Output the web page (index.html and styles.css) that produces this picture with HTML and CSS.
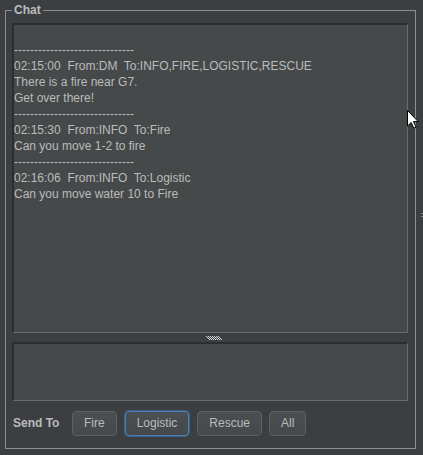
FILE: index.html
```html
<!DOCTYPE html>
<html lang="en">
<head>
<meta charset="UTF-8">
<title>Chat</title>
<link rel="stylesheet" href="styles.css">
</head>
<body>
<div class="chat-box">
    <span class="chat-title">Chat</span>
    <!-- Message log -->
    <div class="log">
        <div class="line">&nbsp;</div>
        <div class="line">------------------------------</div>
        <div class="line">02:15:00&nbsp; From:DM&nbsp; To:INFO,FIRE,LOGISTIC,RESCUE</div>
        <div class="line">There is a fire near G7.</div>
        <div class="line">Get over there!</div>
        <div class="line">------------------------------</div>
        <div class="line">02:15:30&nbsp; From:INFO&nbsp; To:Fire</div>
        <div class="line">Can you move 1-2 to fire</div>
        <div class="line">------------------------------</div>
        <div class="line">02:16:06&nbsp; From:INFO&nbsp; To:Logistic</div>
        <div class="line">Can you move water 10 to Fire</div>
    </div>
    <!-- Split pane divider -->
    <div class="divider">
        <svg width="16" height="4" viewBox="0 0 16 4">
            <g fill="#d8d8d8">
                <rect x="0" y="0" width="1" height="1"/><rect x="2" y="0" width="1" height="1"/>
                <rect x="4" y="0" width="1" height="1"/><rect x="6" y="0" width="1" height="1"/>
                <rect x="8" y="0" width="1" height="1"/><rect x="10" y="0" width="1" height="1"/>
                <rect x="12" y="0" width="1" height="1"/>
                <rect x="1" y="1" width="1" height="1"/><rect x="3" y="1" width="1" height="1"/>
                <rect x="5" y="1" width="1" height="1"/><rect x="7" y="1" width="1" height="1"/>
                <rect x="9" y="1" width="1" height="1"/><rect x="11" y="1" width="1" height="1"/>
                <rect x="13" y="1" width="1" height="1"/>
                <rect x="2" y="2" width="1" height="1"/><rect x="4" y="2" width="1" height="1"/>
                <rect x="6" y="2" width="1" height="1"/><rect x="8" y="2" width="1" height="1"/>
                <rect x="10" y="2" width="1" height="1"/><rect x="12" y="2" width="1" height="1"/>
                <rect x="14" y="2" width="1" height="1"/>
                <rect x="3" y="3" width="1" height="1"/><rect x="5" y="3" width="1" height="1"/>
                <rect x="7" y="3" width="1" height="1"/><rect x="9" y="3" width="1" height="1"/>
                <rect x="11" y="3" width="1" height="1"/><rect x="13" y="3" width="1" height="1"/>
                <rect x="15" y="3" width="1" height="1"/>
            </g>
        </svg>
    </div>
    <!-- Message input -->
    <div class="input"></div>
    <!-- Recipients -->
    <div class="send-row">
        <span class="send-label">Send To</span>
        <button class="btn">Fire</button>
        <button class="btn btn-focus">Logistic</button>
        <button class="btn">Rescue</button>
        <button class="btn">All</button>
    </div>
</div>
<span class="edge-grip"></span>
<!-- Mouse pointer from the screenshot -->
<svg class="cursor" width="12" height="19" viewBox="0 0 12 19">
    <path d="M0.5 0.5 L0.5 16 L4.2 12.5 L6.8 18.2 L9 17.2 L6.5 11.6 L11.2 11.6 Z" fill="#fff" stroke="#000" stroke-width="1"/>
</svg>
</body>
</html>
```

FILE: styles.css
```css
/* Page */
body {
    margin: 0;
    background-color: #3c3f41;
    font-family: "Liberation Sans", Arial, sans-serif;
    font-size: 12px;
    color: #bbbbbb;
    width: 423px;
    height: 455px;
    position: relative;
    overflow: hidden;
}
/* Titled border */
.chat-box {
    position: relative;
    box-sizing: border-box;
    margin: 10px 0 0 5px;
    width: 411px;
    height: 439px;
    border: 1px solid #8d9092;
    padding: 12px 7px 0 6px;
}
.chat-title {
    position: absolute;
    top: -8px;
    left: 6px;
    padding: 0 2px;
    background-color: #3c3f41;
    font-weight: bold;
    line-height: 15px;
}
/* Text areas */
.log, .input {
    box-sizing: border-box;
    background-color: #45494a;
    border-top: 2px solid #2b2d2e;
    border-left: 2px solid #2b2d2e;
    border-right: 1px solid #686b6d;
    border-bottom: 1px solid #686b6d;
}
.log {
    height: 310px;
    padding-top: 1px;
}
.line {
    height: 16px;
    line-height: 16px;
    white-space: nowrap;
}
.divider {
    height: 9px;
    display: flex;
    justify-content: center;
    align-items: center;
    padding-left: 8px;
}
.divider svg {
    display: block;
}
.input {
    height: 59px;
}
/* Send row */
.send-row {
    display: flex;
    align-items: center;
    margin-top: 10px;
    height: 24px;
}
.send-label {
    font-weight: bold;
    width: 54px;
    margin-left: 1px;
    margin-right: 5px;
}
.btn {
    box-sizing: border-box;
    height: 25px;
    padding: 0 11px;
    margin-right: 7px;
    font-family: "Liberation Sans", Arial, sans-serif;
    font-size: 12px;
    color: #bbbbbb;
    background: linear-gradient(#4b4f51, #45494b);
    border: 1px solid #5c6062;
    border-radius: 4px;
}
.btn-focus {
    border-color: #4a7fb8;
    box-shadow: 0 0 0 1px #3d6185;
    margin-left: 1px;
    margin-right: 8px;
}
.edge-grip {
    position: absolute;
    left: 421px;
    top: 213px;
    width: 2px;
    height: 6px;
    background: repeating-linear-gradient(#8a8a8a 0 1px, transparent 1px 3px);
}
.cursor {
    position: absolute;
    left: 407px;
    top: 110px;
}
```
